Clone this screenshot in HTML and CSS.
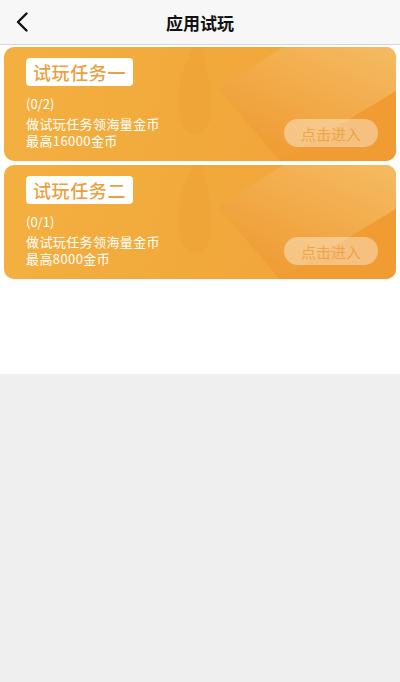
FILE: index.html
```html
<!DOCTYPE html>
<html lang="zh-CN">
<head>
  <meta charset="UTF-8" />
  <meta name="viewport" content="width=device-width, initial-scale=1.0" />
  <title>应用试玩</title>
  <link rel="stylesheet" href="styles.css">
</head>
<body>
<header class="topbar">
  <a class="back" href="#">
    <svg width="14" height="20" viewBox="0 0 14 20">
      <path d="M11.5 1.5 L3 10 L11.5 18.5" fill="none" stroke="#111" stroke-width="2.4" stroke-linecap="round" stroke-linejoin="round"/>
    </svg>
  </a>
  <h1>应用试玩</h1>
</header>

<main class="list">
  <div class="task">
    <svg class="task-bg" viewBox="0 0 392 114" preserveAspectRatio="none">
      <defs>
        <linearGradient id="shine" x1="1" y1="0" x2="0.3" y2="1">
          <stop offset="0" stop-color="#f5bb62"/>
          <stop offset="1" stop-color="#ef9b32"/>
        </linearGradient>
      </defs>
      <path d="M190 0 C172 30 172 60 178 78 C184 92 204 92 206 70 C208 45 204 20 198 0 Z" fill="#ee9c2e" opacity="0.28"/>
      <polygon points="279,0 392,0 392,44 276,114 214,42" fill="url(#shine)"/>
      <polygon points="276,114 392,44 392,114" fill="#f09c32"/>
    </svg>
    <div class="task-body">
      <span class="task-name">试玩任务一</span>
      <p class="task-count">(0/2)</p>
      <div class="task-foot">
        <p class="task-desc">做试玩任务领海量金币<br>最高16000金币</p>
        <button class="task-btn">点击进入</button>
      </div>
    </div>
  </div>

  <div class="task">
    <svg class="task-bg" viewBox="0 0 392 114" preserveAspectRatio="none">
      <path d="M190 0 C172 30 172 60 178 78 C184 92 204 92 206 70 C208 45 204 20 198 0 Z" fill="#ee9c2e" opacity="0.28"/>
      <polygon points="279,0 392,0 392,44 276,114 214,42" fill="url(#shine)"/>
      <polygon points="276,114 392,44 392,114" fill="#f09c32"/>
    </svg>
    <div class="task-body">
      <span class="task-name">试玩任务二</span>
      <p class="task-count">(0/1)</p>
      <div class="task-foot">
        <p class="task-desc">做试玩任务领海量金币<br>最高8000金币</p>
        <button class="task-btn">点击进入</button>
      </div>
    </div>
  </div>
</main>
</body>
</html>
```

FILE: styles.css
```css
* {
  box-sizing: border-box;
  margin: 0;
  padding: 0;
}

body {
  background-color: #efefef;
  font-family: "Noto Sans CJK SC", "Noto Sans", sans-serif;
  color: #222;
}

.topbar {
  height: 45px;
  background-color: #f7f7f7;
  border-bottom: 1px solid #d6d6d6;
  display: flex;
  align-items: center;
  justify-content: center;
  position: relative;
}

.back {
  position: absolute;
  left: 15px;
  top: 12px;
  display: flex;
}

.topbar h1 {
  font-size: 17px;
  font-weight: 600;
  color: #111;
}

.list {
  background-color: #fff;
  height: 329px;
  padding: 2px 4px 0;
  display: flex;
  flex-direction: column;
  gap: 4px;
}

.task {
  position: relative;
  height: 114px;
  border-radius: 10px;
  overflow: hidden;
  background: linear-gradient(100deg, #f3b040 0%, #f2a93c 50%, #f1a338 100%);
}

.task-bg {
  position: absolute;
  top: 0;
  left: 0;
  width: 100%;
  height: 100%;
}

.task-body {
  position: relative;
  padding: 11px 18px 0 22px;
  color: #fff;
}

.task-name {
  display: inline-block;
  background-color: #fff;
  color: #eb9f3f;
  font-size: 18px;
  font-weight: 500;
  line-height: 28px;
  padding: 0 7px;
  border-radius: 4px;
  letter-spacing: 0.6px;
}

.task-count {
  font-size: 13px;
  line-height: 17px;
  margin-top: 9px;
}

.task-foot {
  display: flex;
  justify-content: space-between;
  align-items: flex-end;
  margin-top: 3px;
}

.task-desc {
  font-size: 13px;
  line-height: 17px;
  letter-spacing: 0.4px;
}

.task-btn {
  width: 94px;
  height: 28px;
  border: none;
  border-radius: 14px;
  background-color: rgba(255, 255, 255, 0.38);
  color: #efa445;
  font-family: inherit;
  font-size: 15px;
  margin-bottom: 2px;
}
```
